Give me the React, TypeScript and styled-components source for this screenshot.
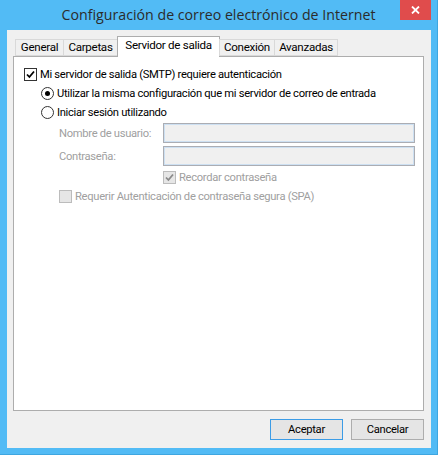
import React from "react";
import styled, { createGlobalStyle } from "styled-components";

const Global = createGlobalStyle`
  html, body { margin: 0; padding: 0; }
  body {
    width: 438px;
    height: 455px;
    overflow: hidden;
    background: #52bbf5;
    font-family: Roboto, "Open Sans", sans-serif;
  }
  #root { width: 438px; height: 455px; }
`;

const Window = styled.div`
  width: 438px;
  height: 455px;
  display: flex;
  flex-direction: column;
  background: #52bbf5;
  box-sizing: border-box;
  border-right: 1px solid #3ea6e0;
  border-bottom: 1px solid #3ea6e0;
`;

const TitleBar = styled.div`
  height: 30px;
  display: grid;
  grid-template-columns: 1fr auto 1fr;
  align-items: start;
`;

const Title = styled.div`
  grid-column: 2;
  font-family: "Open Sans", sans-serif;
  font-size: 14.2px;
  line-height: 30px;
  color: #2b2b2b;
  white-space: nowrap;
`;

const CloseButton = styled.div`
  grid-column: 3;
  justify-self: end;
  width: 31px;
  height: 20px;
  margin-right: 6px;
  background: #e04c4c;
  display: flex;
  align-items: center;
  justify-content: center;
`;

const Client = styled.div`
  flex: 1;
  margin: 0 6px 6px 7px;
  background: #f0f0f0;
  display: flex;
  flex-direction: column;
  padding: 7px 7px 8px 6px;
  box-sizing: border-box;
  font-family: Roboto, sans-serif;
  font-size: 11.2px;
  letter-spacing: -0.3px;
  color: #000;
`;

const TabStrip = styled.div`
  display: flex;
  align-items: flex-end;
  height: 19px;
  padding-left: 2px;
  position: relative;
  z-index: 1;
`;

const Tab = styled.div<{ $active?: boolean; $w: number }>`
  box-sizing: border-box;
  width: ${(p) => p.$w}px;
  height: ${(p) => (p.$active ? "21px" : "17px")};
  margin-bottom: ${(p) => (p.$active ? "-1px" : "0")};
  margin-left: -1px;
  padding-bottom: ${(p) => (p.$active ? "3px" : "0")};
  border: 1px solid ${(p) => (p.$active ? "#adadad" : "#d9d9d9")};
  border-bottom: ${(p) => (p.$active ? "none" : "1px solid #d9d9d9")};
  background: ${(p) => (p.$active ? "#ffffff" : "#f0f0f0")};
  display: flex;
  align-items: center;
  justify-content: center;
  white-space: nowrap;
  line-height: 1;
  font-size: 11.6px;
  &:first-child { margin-left: 0; }
`;

const Panel = styled.div`
  flex: 1;
  background: #fff;
  border: 1px solid #adadad;
  padding: 11px 10px 0 10px;
  display: flex;
  flex-direction: column;
`;

const Row = styled.div<{ $indent?: number; $mt?: number }>`
  display: flex;
  align-items: center;
  height: 13px;
  margin-left: ${(p) => p.$indent ?? 0}px;
  margin-top: ${(p) => p.$mt ?? 0}px;
  gap: 3px;
  white-space: nowrap;
`;

const Label = styled.span<{ $disabled?: boolean }>`
  color: ${(p) => (p.$disabled ? "#a0a0a0" : "#000")};
  line-height: 13px;
  white-space: nowrap;
`;

const Box = styled.span<{ $disabled?: boolean }>`
  box-sizing: border-box;
  width: 13px;
  height: 13px;
  flex: none;
  border: 1px solid ${(p) => (p.$disabled ? "#bcbcbc" : "#333")};
  background: ${(p) => (p.$disabled ? "#e6e6e6" : "#fff")};
  display: flex;
  align-items: center;
  justify-content: center;
`;

const Radio = styled.span`
  box-sizing: border-box;
  width: 13px;
  height: 13px;
  flex: none;
  border: 1px solid #333;
  border-radius: 50%;
  background: #fff;
  display: flex;
  align-items: center;
  justify-content: center;
`;

const Dot = styled.span`
  width: 5px;
  height: 5px;
  border-radius: 50%;
  background: #000;
`;

const Field = styled.div<{ $mt: number }>`
  display: grid;
  grid-template-columns: 104px 252px;
  align-items: center;
  margin-left: 35px;
  margin-top: ${(p) => p.$mt}px;
`;

const Input = styled.div`
  box-sizing: border-box;
  height: 20px;
  border: 1px solid #abadb3;
  box-shadow: inset 0 0 0 1px #cde0f2;
  background: #f0f0f0;
`;

const ButtonRow = styled.div`
  display: flex;
  justify-content: flex-end;
  gap: 8px;
  margin-top: 8px;
`;

const Button = styled.div<{ $default?: boolean }>`
  box-sizing: border-box;
  width: 73px;
  height: 21px;
  border: 1px solid ${(p) => (p.$default ? "#3c9ce6" : "#adadad")};
  background: #e5e5e5;
  display: flex;
  align-items: center;
  justify-content: center;
`;

const Check = ({ color }: { color: string }) => (
  <svg width="9" height="9" viewBox="0 0 9 9">
    <path d="M1 4.5 L3.4 7 L8 1.5" fill="none" stroke={color} strokeWidth="1.8" />
  </svg>
);

export default function App() {
  return (
    <>
      <Global />
      <Window>
        <TitleBar>
          <Title>Configuración de correo electrónico de Internet</Title>
          <CloseButton>
            <svg width="9" height="8" viewBox="0 0 9 8">
              <path d="M1 0.5 L8 7.5 M8 0.5 L1 7.5" stroke="#fff" strokeWidth="1.8" />
            </svg>
          </CloseButton>
        </TitleBar>
        <Client>
          <TabStrip>
            <Tab $w={49}>General</Tab>
            <Tab $w={55}>Carpetas</Tab>
            <Tab $w={103} $active>Servidor de salida</Tab>
            <Tab $w={56}>Conexión</Tab>
            <Tab $w={64}>Avanzadas</Tab>
          </TabStrip>
          <Panel>
            <Row>
              <Box><Check color="#000" /></Box>
              <Label>Mi servidor de salida (SMTP) requiere autenticación</Label>
            </Row>
            <Row $indent={17} $mt={6}>
              <Radio><Dot /></Radio>
              <Label>Utilizar la misma configuración que mi servidor de correo de entrada</Label>
            </Row>
            <Row $indent={17} $mt={6}>
              <Radio />
              <Label>Iniciar sesión utilizando</Label>
            </Row>
            <Field $mt={4}>
              <Label $disabled>Nombre de usuario:</Label>
              <Input />
            </Field>
            <Field $mt={3}>
              <Label $disabled>Contraseña:</Label>
              <Input />
            </Field>
            <Row $indent={139} $mt={5}>
              <Box $disabled><Check color="#8a8a8a" /></Box>
              <Label $disabled>Recordar contraseña</Label>
            </Row>
            <Row $indent={35} $mt={6}>
              <Box $disabled />
              <Label $disabled>Requerir Autenticación de contraseña segura (SPA)</Label>
            </Row>
          </Panel>
          <ButtonRow>
            <Button $default>Aceptar</Button>
            <Button>Cancelar</Button>
          </ButtonRow>
        </Client>
      </Window>
    </>
  );
}
